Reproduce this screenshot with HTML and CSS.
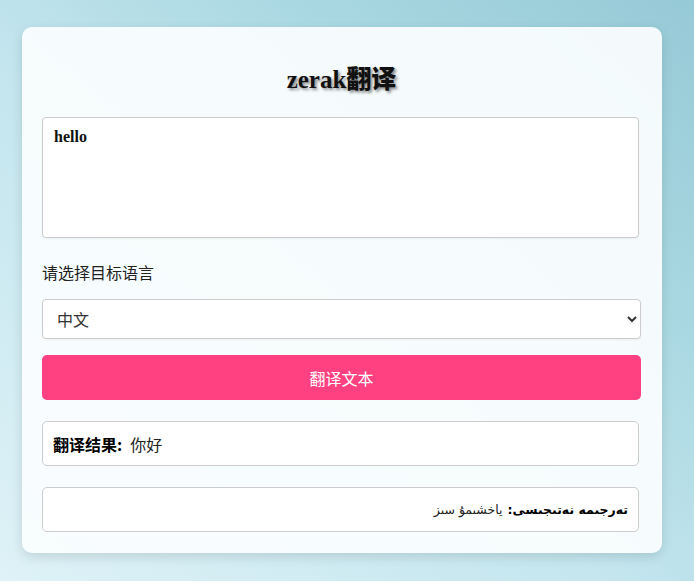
FILE: index.html
```html
<!DOCTYPE html>
<html lang="zh">
<head>
<meta charset="utf-8">
<title>zerak翻译</title>
<link rel="stylesheet" href="styles.css">
</head>
<body>
<div class="card">
  <h1 class="title">zerak翻译</h1>
  <textarea class="source">hello</textarea>
  <label class="label" for="lang">请选择目标语言</label>
  <select class="lang" id="lang">
    <option>中文</option>
    <option>English</option>
  </select>
  <button class="btn">翻译文本</button>
  <div class="result"><b>翻译结果:</b> 你好</div>
  <div class="result rtl" dir="rtl"><b>تەرجىمە نەتىجىسى:</b> ياخشىمۇ سىز</div>
</div>
</body>
</html>
```

FILE: styles.css
```css
html, body {
  margin: 0;
  padding: 0;
}
body {
  width: 694px;
  height: 581px;
  overflow: hidden;
  background: linear-gradient(to top right, #def2f7 0%, #c3e5ee 45%, #a6d6e0 75%, #96cad6 100%);
  font-family: "Noto Sans CJK SC", "Liberation Sans", sans-serif;
  color: #222;
}
.card {
  margin: 27px 0 0 22px;
  width: 640px;
  box-sizing: border-box;
  padding: 38px 21px 21px 20px;
  background: rgba(250, 253, 254, 0.94);
  border-radius: 10px;
  box-shadow: 0 4px 12px rgba(0, 0, 0, 0.12);
  display: flex;
  flex-direction: column;
}
.title {
  margin: 0;
  font-family: "Liberation Serif", "Noto Sans CJK SC", serif;
  font-weight: 900;
  font-size: 25px;
  line-height: 30px;
  text-align: center;
  color: #111;
  text-shadow: 2px 2px 3px rgba(0, 0, 0, 0.45);
}
.source {
  margin-top: 22px;
  width: 597px;
  height: 121px;
  box-sizing: border-box;
  padding: 10px 11px;
  border: 1px solid #ccc;
  border-radius: 4px;
  resize: none;
  font-family: "Liberation Serif", serif;
  font-weight: bold;
  font-size: 16px;
  color: #111;
  background: #fff;
  box-shadow: 0 1px 2px rgba(0,0,0,0.05);
}
.label {
  margin-top: 22px;
  font-size: 16px;
  line-height: 24px;
  color: #222;
}
.lang {
  margin-top: 15px;
  width: 599px;
  height: 40px;
  box-sizing: border-box;
  padding: 0 10px;
  border: 1px solid #ccc;
  border-radius: 4px;
  background: #fff;
  font-family: "Noto Sans CJK SC", sans-serif;
  font-size: 16px;
  color: #333;
  box-shadow: 0 1px 2px rgba(0,0,0,0.05);
}
.btn {
  margin-top: 16px;
  width: 599px;
  height: 45px;
  border: none;
  border-radius: 5px;
  background: #ff4081;
  color: #fff;
  font-family: "Noto Sans CJK SC", sans-serif;
  font-size: 16px;
}
.result {
  margin-top: 21px;
  width: 597px;
  height: 45px;
  box-sizing: border-box;
  padding: 0 10px;
  display: flex;
  align-items: center;
  gap: 8px;
  border: 1px solid #ccc;
  border-radius: 5px;
  background: #fff;
  font-family: "Noto Sans CJK SC", sans-serif;
  font-size: 16px;
  color: #222;
}
.result b {
  color: #000;
}
.rtl {
  font-family: "DejaVu Sans", sans-serif;
  font-size: 12.5px;
  gap: 5px;
}
```
